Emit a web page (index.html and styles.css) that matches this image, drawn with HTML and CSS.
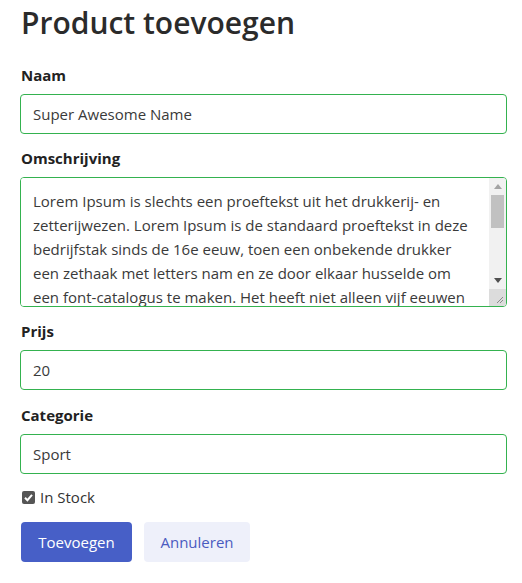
FILE: index.html
```html
<!DOCTYPE html>
<html lang="nl">
<head>
<meta charset="utf-8">
<title>Product toevoegen</title>
<link rel="stylesheet" href="styles.css">
</head>
<body>
<main class="page">
  <h1 class="title">Product toevoegen</h1>
  <form class="form">
    <div class="field">
      <label class="label" for="naam">Naam</label>
      <input class="control" id="naam" type="text" value="Super Awesome Name">
    </div>
    <div class="field">
      <label class="label" for="oms">Omschrijving</label>
      <div class="area-box">
        <textarea class="area" id="oms">Lorem Ipsum is slechts een proeftekst uit het drukkerij- en zetterijwezen. Lorem Ipsum is de standaard proeftekst in deze bedrijfstak sinds de 16e eeuw, toen een onbekende drukker een zethaak met letters nam en ze door elkaar husselde om een font-catalogus te maken. Het heeft niet alleen vijf eeuwen overleefd maar is ook, vrijwel onveranderd, overgenomen in elektronische letterzetting.</textarea>
        <div class="sb" aria-hidden="true">
          <div class="sb-btn"><svg width="8" height="5" viewBox="0 0 8 5"><path d="M0 5 L4 0 L8 5 Z" fill="#a3a3a3"/></svg></div>
          <div class="sb-track"><div class="sb-thumb"></div></div>
          <div class="sb-btn"><svg width="8" height="5" viewBox="0 0 8 5"><path d="M0 0 L8 0 L4 5 Z" fill="#505050"/></svg></div>
          <div class="sb-corner"><svg width="17" height="17" viewBox="0 0 17 17"><path d="M14 8 L8 14 M14 11 L11 14" stroke="#8a8a8a" stroke-width="1" fill="none"/></svg></div>
        </div>
      </div>
    </div>
    <div class="field field-wide">
      <label class="label" for="prijs">Prijs</label>
      <input class="control" id="prijs" type="text" value="20">
    </div>
    <div class="field">
      <label class="label" for="cat">Categorie</label>
      <input class="control" id="cat" type="text" value="Sport">
    </div>
    <label class="check"><span class="box"><svg viewBox="0 0 13 13" width="13" height="13"><path d="M3 6.8 L5.4 9.2 L10 3.8" fill="none" stroke="#fff" stroke-width="2"/></svg></span> In Stock</label>
    <div class="actions">
      <button type="button" class="btn btn-primary">Toevoegen</button>
      <button type="button" class="btn btn-light">Annuleren</button>
    </div>
  </form>
</main>
</body>
</html>
```
FILE: styles.css
```css
html, body {
  margin: 0;
  padding: 0;
  background: #fff;
}
body {
  font-family: "Open Sans", "Noto Sans", sans-serif;
  color: #212529;
  font-size: 15px;
}
.page {
  padding: 0 15px 0 20px;
}
.title {
  margin: 0;
  padding-top: 3px;
  padding-left: 1px;
  font-size: 30px;
  font-weight: 600;
  line-height: 40px;
  color: #2b2b2b;
}
.form {
  margin-top: 22px;
  display: flex;
  flex-direction: column;
}
.field {
  display: flex;
  flex-direction: column;
  margin-bottom: 14px;
}
.field-wide {
  margin-bottom: 15px;
}
.label {
  font-weight: 700;
  font-size: 15px;
  line-height: 20px;
  margin-bottom: 9px;
  margin-left: 1px;
  color: #222;
}
.control {
  box-sizing: border-box;
  width: 487px;
  height: 40px;
  border: 1px solid #34b24f;
  border-radius: 4px;
  padding: 0 12px;
  font-family: inherit;
  font-size: 15px;
  color: #3a3a3a;
  background: #fff;
  outline: none;
}
.area-box {
  box-sizing: border-box;
  width: 487px;
  height: 130px;
  border: 1px solid #34b24f;
  border-radius: 4px;
  display: flex;
  overflow: hidden;
  background: #fff;
}
.area {
  flex: 1;
  min-width: 0;
  border: none;
  outline: none;
  resize: none;
  overflow: hidden;
  margin: 0;
  padding: 11px 12px 0 12px;
  font-family: inherit;
  font-size: 15px;
  line-height: 24px;
  color: #3a3a3a;
  background: #fff;
}
.sb {
  width: 17px;
  flex: none;
  display: flex;
  flex-direction: column;
  background: #f1f1f1;
}
.sb-btn {
  height: 17px;
  display: flex;
  align-items: center;
  justify-content: center;
}
.sb-track {
  flex: 1;
  display: flex;
  flex-direction: column;
}
.sb-thumb {
  height: 33px;
  margin: 0 2px;
  background: #c1c1c1;
}
.sb-corner {
  height: 17px;
  background: #dcdcdc;
}
.sb-corner svg {
  display: block;
}
.check {
  display: flex;
  align-items: center;
  gap: 5px;
  font-size: 15px;
  color: #333;
  margin-top: -1px;
  line-height: 20px;
}
.box {
  width: 13px;
  height: 13px;
  margin-left: 2px;
  border-radius: 2px;
  background: #555;
  display: flex;
}
.actions {
  display: flex;
  gap: 12px;
  margin-top: 15px;
  padding-left: 1px;
}
.btn {
  height: 40px;
  border: none;
  border-radius: 4px;
  font-family: inherit;
  font-size: 15px;
  padding: 0;
}
.btn-primary {
  background: #475fc7;
  color: #fff;
  width: 111px;
}
.btn-light {
  background: #eef0fa;
  color: #4a5bc0;
  width: 106px;
}
```
